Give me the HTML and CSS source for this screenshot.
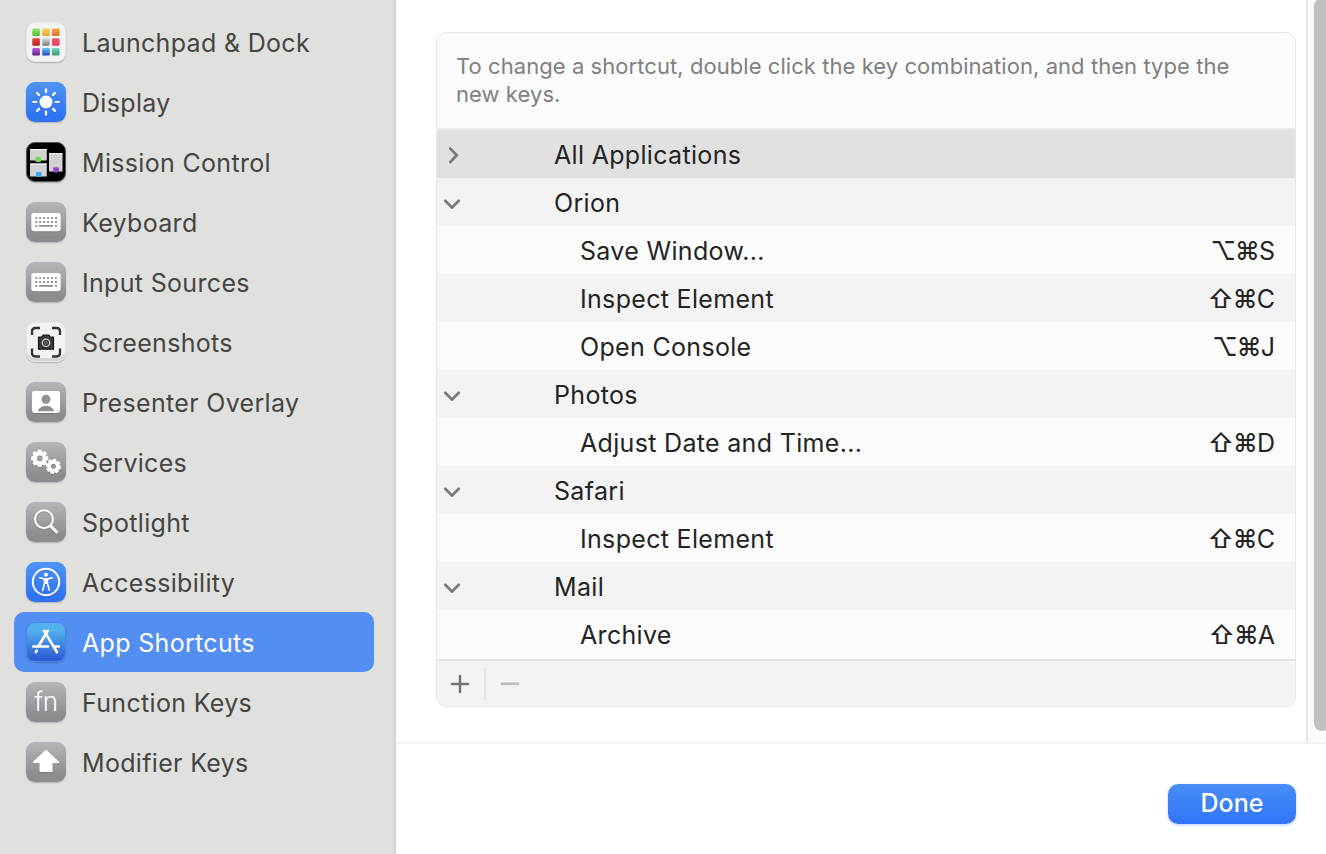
FILE: index.html
```html
<!DOCTYPE html>
<html lang="en">
<head>
<meta charset="utf-8">
<title>Keyboard Shortcuts</title>
<link rel="stylesheet" href="styles.css">
</head>
<body>
<svg class="defs" aria-hidden="true">
  <defs>
    <linearGradient id="c1" x2="0" y2="1"><stop stop-color="#8fea75"/><stop offset="1" stop-color="#55bd36"/></linearGradient>
    <linearGradient id="c2" x2="0" y2="1"><stop stop-color="#ffce63"/><stop offset="1" stop-color="#e9a52d"/></linearGradient>
    <linearGradient id="c3" x2="0" y2="1"><stop stop-color="#f5a849"/><stop offset="1" stop-color="#d9702b"/></linearGradient>
    <linearGradient id="c4" x2="0" y2="1"><stop stop-color="#e04a3c"/><stop offset="1" stop-color="#b02318"/></linearGradient>
    <linearGradient id="c5" x2="0" y2="1"><stop stop-color="#d5e2e8"/><stop offset="1" stop-color="#777b7d"/></linearGradient>
    <linearGradient id="c6" x2="0" y2="1"><stop stop-color="#f4566e"/><stop offset="1" stop-color="#dd3f58"/></linearGradient>
    <linearGradient id="c7" x2="0" y2="1"><stop stop-color="#b765e0"/><stop offset="1" stop-color="#5a1792"/></linearGradient>
    <linearGradient id="c8" x2="0" y2="1"><stop stop-color="#5ec8fa"/><stop offset="1" stop-color="#1c48c8"/></linearGradient>
    <linearGradient id="c9" x2="0" y2="1"><stop stop-color="#6fdcc8"/><stop offset="1" stop-color="#3c9470"/></linearGradient>
    <symbol id="kbd" viewBox="0 0 40 40">
      <rect x="5.3" y="11" width="29.4" height="18.2" rx="2.6" fill="#fff"/>
      <path d="M9.3 16.2h22M9.3 20h22" stroke="#8e8e93" stroke-width="1.8" stroke-dasharray="2 1.92"/>
      <path d="M9.3 23.9h2M13 23.9h14.2M29 23.9h2" stroke="#8e8e93" stroke-width="1.8"/>
    </symbol>
    <symbol id="down" viewBox="0 0 18 18"><path d="M2.300 6.800 9 13.600l6.700-6.800" fill="none" stroke="#7b7b7b" stroke-width="2.800" stroke-linecap="round" stroke-linejoin="round"/></symbol>
    <path id="tooth" d="M-1.700-8.100h3.400l.7 3.200h-4.800z" fill="#fff"/>
    <g id="gear">
      <circle r="4.600" fill="none" stroke="#fff" stroke-width="3.800"/>
      <use href="#tooth"/><use href="#tooth" transform="rotate(45)"/><use href="#tooth" transform="rotate(90)"/><use href="#tooth" transform="rotate(135)"/>
      <use href="#tooth" transform="rotate(180)"/><use href="#tooth" transform="rotate(225)"/><use href="#tooth" transform="rotate(270)"/><use href="#tooth" transform="rotate(315)"/>
    </g>
  </defs>
</svg>
<div class="window">
  <nav class="sidebar">
    <a class="item"><span class="icon light"><svg viewBox="0 0 40 40">
      <rect x="6.300" y="6.500" width="7.600" height="7.600" rx="1.300" fill="url(#c1)"/><rect x="16.200" y="6.500" width="7.600" height="7.600" rx="1.300" fill="url(#c2)"/><rect x="26" y="6.500" width="7.600" height="7.600" rx="1.300" fill="url(#c3)"/>
      <rect x="6.300" y="16.200" width="7.600" height="7.600" rx="1.300" fill="url(#c4)"/><rect x="16.200" y="16.200" width="7.600" height="7.600" rx="1.300" fill="url(#c5)"/><rect x="26" y="16.200" width="7.600" height="7.600" rx="1.300" fill="url(#c6)"/>
      <rect x="6.300" y="26" width="7.600" height="7.600" rx="1.300" fill="url(#c7)"/><rect x="16.200" y="26" width="7.600" height="7.600" rx="1.300" fill="url(#c8)"/><rect x="26" y="26" width="7.600" height="7.600" rx="1.300" fill="url(#c9)"/>
    </svg></span><span class="label">Launchpad &amp; Dock</span></a>
    <a class="item"><span class="icon blue"><svg viewBox="0 0 40 40">
      <circle cx="20" cy="20" r="6.500" fill="#fff"/>
      <path d="M20 7.300v3M20 29.700v3M7.300 20h3M29.700 20h3M11.100 11.100l2 2M26.900 26.900l2 2M28.900 11.100l-2 2M13.100 26.900l-2 2" stroke="#fff" stroke-width="2.200" stroke-linecap="round"/>
    </svg></span><span class="label">Display</span></a>
    <a class="item"><span class="icon black"><svg viewBox="0 0 40 40">
      <path d="M4 7h16.800v11.500H4zM4 21.500h16.800v13H4zM23 11.200h13.500V29.500H23z" fill="#d2d2d2"/>
      <path d="M4 7.500h16.800M4 22h16.800M23 11.700h13.500" stroke="#fafafa" stroke-width="1"/>
      <rect x="9.500" y="15" width="5.500" height="5" rx="1" fill="#70dc54"/><rect x="10" y="30" width="5.500" height="5" rx="1" fill="#42a7f4"/><rect x="27.300" y="25.200" width="5.600" height="5.200" rx="1" fill="#8d46cf"/>
    </svg></span><span class="label">Mission Control</span></a>
    <a class="item"><span class="icon gray"><svg><use href="#kbd"/></svg></span><span class="label">Keyboard</span></a>
    <a class="item"><span class="icon gray"><svg><use href="#kbd"/></svg></span><span class="label">Input Sources</span></a>
    <a class="item"><span class="icon light ridge"><svg viewBox="0 0 40 40">
      <path d="M6 13V9.500Q6 6 9.500 6H14M26 6h4.500Q34 6 34 9.500V13M34 26.500V31q0 3.500-3.500 3.500H26M14 34.500H9.500Q6 34.500 6 31v-4.500" fill="none" stroke="#333" stroke-width="2.300"/>
      <path d="M12.500 15.200h3.300l1.300-2h5.800l1.300 2h3.300v12h-15z" fill="#383838" stroke="#161616" stroke-width="1.200" stroke-linejoin="round"/>
      <circle cx="20" cy="20.800" r="3.700" fill="#333" stroke="#ddd" stroke-width="1.200"/><circle cx="20" cy="20.800" r="1.500" fill="none" stroke="#999" stroke-width=".7"/>
    </svg></span><span class="label">Screenshots</span></a>
    <a class="item"><span class="icon gray"><svg viewBox="0 0 40 40">
      <rect x="6" y="9" width="28" height="22" rx="2.400" fill="#fff"/><circle cx="20" cy="17.300" r="4.500" fill="#929297"/><path d="M12 29.200c.5-3.200 4-5.200 8-5.200s7.500 2 8 5.200z" fill="#8e8e93"/>
    </svg></span><span class="label">Presenter Overlay</span></a>
    <a class="item"><span class="icon gray"><svg viewBox="0 0 40 40">
      <use href="#gear" transform="translate(13.700 16.400) scale(1.060)"/><use href="#gear" transform="translate(27.400 24.400) rotate(11) scale(.93)"/>
    </svg></span><span class="label">Services</span></a>
    <a class="item"><span class="icon gray"><svg viewBox="0 0 40 40">
      <circle cx="18" cy="17.200" r="9" fill="none" stroke="#fff" stroke-width="2"/><path d="m24.900 24.100 5.500 5.700" stroke="#fff" stroke-width="3" stroke-linecap="round"/>
    </svg></span><span class="label">Spotlight</span></a>
    <a class="item"><span class="icon blue"><svg viewBox="0 0 40 40">
      <circle cx="20" cy="20" r="13.200" fill="none" stroke="#fff" stroke-width="2"/><circle cx="20" cy="12.700" r="2" fill="#fff"/>
      <path d="m13.800 15.900 4.600 1.100h3.200l4.600-1.100M18.500 17v4.500l-1.900 7M21.500 17v4.500l1.900 7" fill="none" stroke="#fff" stroke-width="1.600" stroke-linecap="round" stroke-linejoin="round"/><path d="M18 16.700h4v5.300h-4z" fill="#fff"/>
    </svg></span><span class="label">Accessibility</span></a>
    <a class="item selected"><span class="icon store"><svg viewBox="0 0 40 40">
      <path d="m21.700 8.800-9.400 15.700M18 8.800l3.700 6M22.700 16.400 31 30.200M7.300 24.500H22M27.500 24.500h5.300M10.700 28.600l-.8 1.400" stroke="#fff" stroke-width="2.700" stroke-linecap="round"/>
    </svg></span><span class="label">App Shortcuts</span></a>
    <a class="item"><span class="icon gray fn">fn</span><span class="label">Function Keys</span></a>
    <a class="item"><span class="icon gray"><svg viewBox="0 0 40 40"><path d="M20 9 32 20.300H25.500V29H14.500V20.300H8z" fill="#fff" stroke="#fff" stroke-width="2" stroke-linejoin="round"/></svg></span><span class="label">Modifier Keys</span></a>
  </nav>
  <main class="main">
    <div class="scroll">
      <div class="content">
        <section class="card">
          <p class="hint">To change a shortcut, double click the key combination, and then type the new keys.</p>
          <div class="rows">
            <div class="row group active"><svg class="chev right" viewBox="0 0 18 18"><path d="m7.300 2.600 6.500 6.700-6.500 6.700" fill="none" stroke="#7b7b7b" stroke-width="2.800" stroke-linecap="round" stroke-linejoin="round"/></svg><span>All Applications</span></div>
            <div class="row group"><svg class="chev"><use href="#down"/></svg><span>Orion</span></div>
            <div class="row"><span>Save Window...</span><kbd><b>⌥⌘</b>S</kbd></div>
            <div class="row"><span>Inspect Element</span><kbd><b>⇧⌘</b>C</kbd></div>
            <div class="row"><span>Open Console</span><kbd><b>⌥⌘</b>J</kbd></div>
            <div class="row group"><svg class="chev"><use href="#down"/></svg><span>Photos</span></div>
            <div class="row"><span>Adjust Date and Time...</span><kbd><b>⇧⌘</b>D</kbd></div>
            <div class="row group"><svg class="chev"><use href="#down"/></svg><span>Safari</span></div>
            <div class="row"><span>Inspect Element</span><kbd><b>⇧⌘</b>C</kbd></div>
            <div class="row group"><svg class="chev"><use href="#down"/></svg><span>Mail</span></div>
            <div class="row"><span>Archive</span><kbd><b>⇧⌘</b>A</kbd></div>
          </div>
          <div class="tools">
            <svg class="tool" viewBox="0 0 20 20"><path d="M2 10h16M10 2v16" stroke="#737373" stroke-width="2.500" stroke-linecap="round"/></svg>
            <i class="sep"></i>
            <svg class="tool" viewBox="0 0 20 20"><path d="M2 9.700h16" stroke="#b9b9b9" stroke-width="2.600" stroke-linecap="round"/></svg>
          </div>
        </section>
      </div>
      <div class="track"><div class="thumb"></div></div>
    </div>
    <footer class="actions"><button class="done">Done</button></footer>
  </main>
</div>
</body>
</html>
```
FILE: styles.css
```css
* { box-sizing: border-box; }
body { margin: 0; font-family: Inter, "Liberation Sans", sans-serif; font-size: 25px; color: #242424; background: #fff; overflow: hidden; }
.defs { position: absolute; width: 0; height: 0; }
.window { display: flex; width: 1326px; height: 854px; }
.sidebar { width: 396px; padding: 12px 22px 0 14px; background: linear-gradient(to right, transparent 392px, #d0d0ce 396px), #e0e0de; color: #454543; flex: none; }
.item { display: flex; align-items: center; gap: 16px; height: 60px; padding: 0 12px; border-radius: 10px; }
.item.selected { background: #538ef3; color: #fff; }
.label { white-space: nowrap; padding-top: 2px; letter-spacing: .32px; }
.icon { display: flex; align-items: center; justify-content: center; width: 40px; height: 40px; border-radius: 9px; box-shadow: 0 1px 1.500px rgba(0, 0, 0, .22); flex: none; }
.icon svg { width: 40px; height: 40px; display: block; flex: none; }
.gray { background: linear-gradient(#b5b5ba, #8b8b90 85%); }
.gray svg, .blue svg { filter: drop-shadow(0 1px .5px rgba(0, 0, 0, .15)); }
.blue { background: linear-gradient(#5094f6, #2f73f5 85%); }
.black { background: #000; border: 1px solid #555; }
.light { background: #f3f3f3; border: 1px solid #e8e8e8; }
.ridge { box-shadow: inset 0 -3px 1px #d4d4d4, 0 1px 1px rgba(0, 0, 0, .2); }
.store { background: linear-gradient(#51b0ed 20%, #2a56d2); border: 1px solid #4989e6; }
.fn { color: #fff; font-size: 26px; font-weight: 300; padding-bottom: 2px; letter-spacing: -.5px; }
.main { flex: 1; display: flex; flex-direction: column; min-width: 0; }
.scroll { display: flex; height: 742px; }
.content { width: 910px; padding: 32px 10px 0 40px; }
.card { width: 860px; height: 675px; border: 1px solid #e7e7e7; border-radius: 10px; background: #fbfbfb; overflow: hidden; }
.hint { margin: 0; height: 97px; padding: 19px 50px 0 19px; border-bottom: 2px solid #ebebeb; font-size: 22px; line-height: 28px; color: #808080; letter-spacing: .06px; }
.row { display: flex; align-items: center; height: 48px; padding: 2px 20px 0 143px; letter-spacing: .32px; background: #fbfbfb; }
.row:nth-child(even), .row.group { background: #f3f3f3; }
.row.active { background: #e1e1e1; }
.row kbd { margin-left: auto; font: inherit; letter-spacing: 0; }
.row b { font-weight: 500; letter-spacing: -.9px; }
.row.group { padding-left: 6px; }
.row.active { background: #e1e1e1; }
.chev { width: 18px; height: 18px; margin: 0 93px 0 0; flex: none; }
.tools { display: flex; align-items: center; height: 48px; margin-top: 1px; border-top: 2px solid #e5e5e5; background: #f3f3f3; padding-left: 13px; gap: 15px; }
.tool { width: 20px; height: 20px; }
.sep { width: 2px; height: 32px; margin: 0 -1px; background: #e2e2e2; }
.track { width: 20px; border-left: 2px solid #e7e7e7; background: #fafafa; padding-left: 6px; overflow: hidden; }
.thumb { width: 16px; height: 733px; margin-top: -2px; border-radius: 8px; background: #c1c1c1; }
.actions { flex: 1; display: flex; justify-content: flex-end; border-top: 2px solid #f1f1f1; padding: 40px 30px 0 0; }
.done { width: 128px; height: 40px; padding: 0 0 2px; border: 0; border-radius: 10px; background: linear-gradient(#498ef7, #3074f6); color: #fff; font: 500 25px Inter, sans-serif; box-shadow: 0 1px 3px rgba(48, 116, 246, .35); }
```
